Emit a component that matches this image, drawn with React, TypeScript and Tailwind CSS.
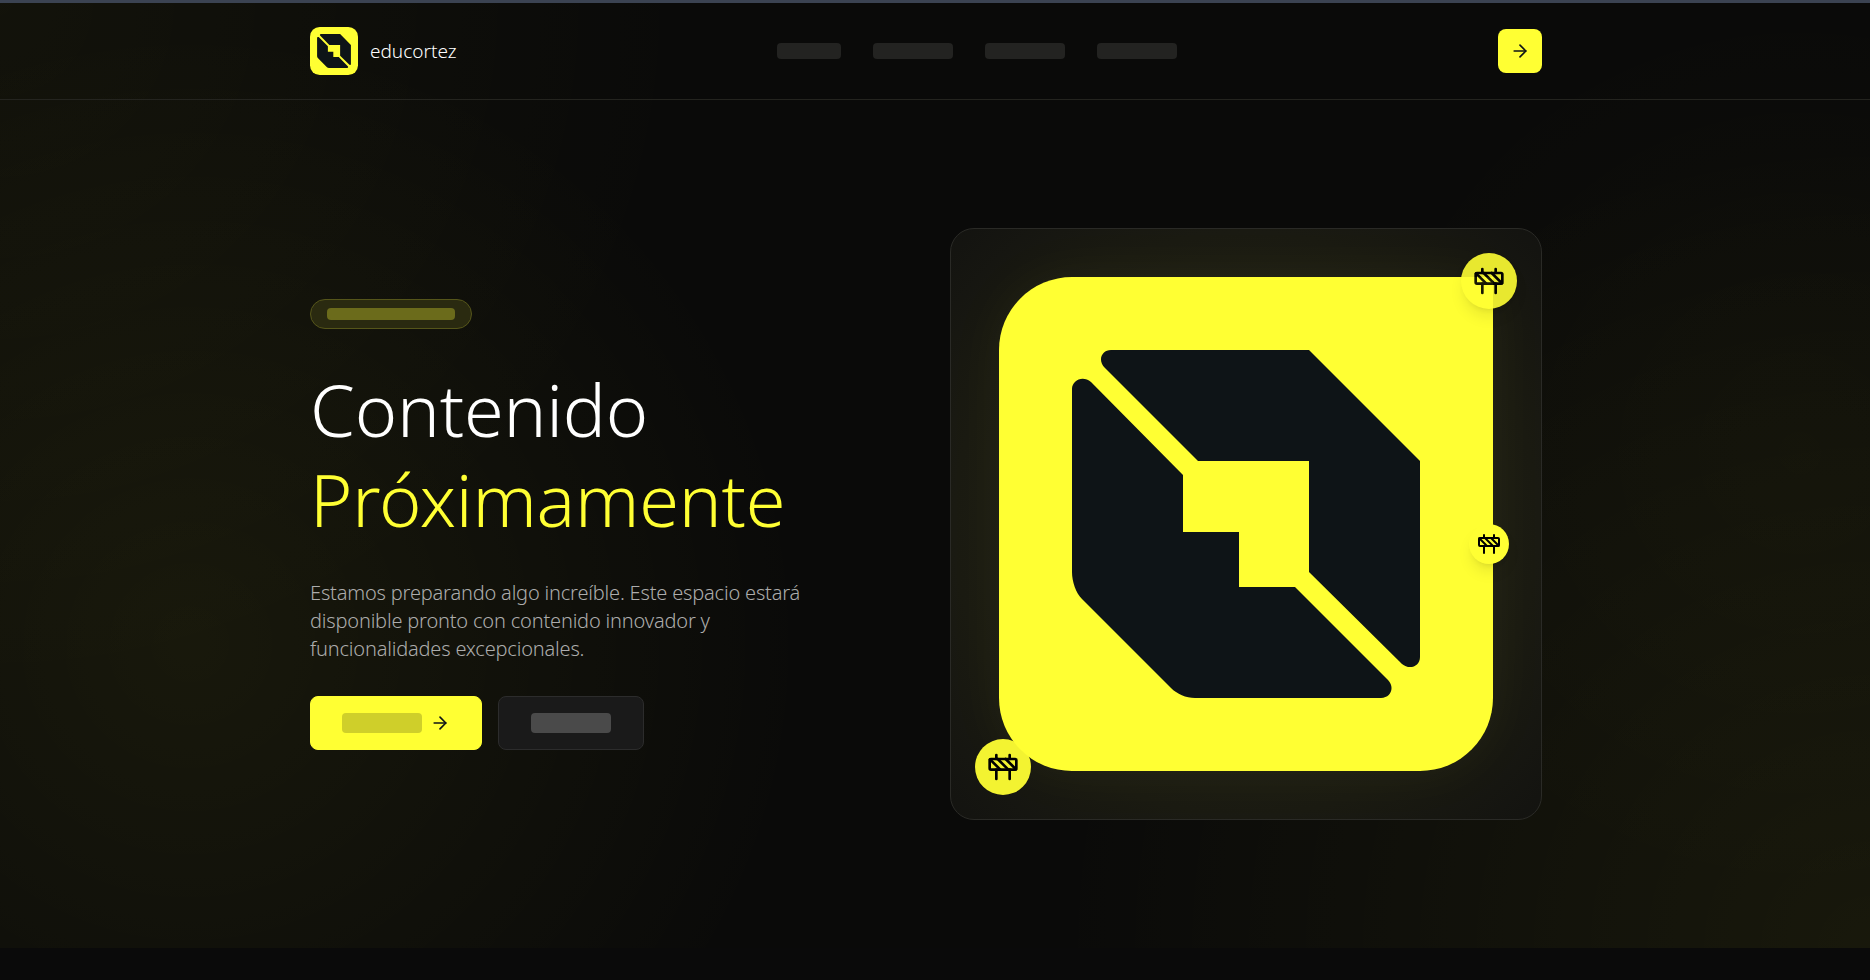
import { ArrowRight, Construction } from "lucide-react";

function Logo({ className, big }: { className: string; big?: boolean }) {
  return (
    <svg viewBox="0 0 494 494" className={className} aria-hidden="true">
      {big ? (
        <path
          fill="#ffff33"
          d="M73 0 L494 0 L494 421 A73 73 0 0 1 421 494 L73 494 A73 73 0 0 1 0 421 L0 73 A73 73 0 0 1 73 0 Z"
        />
      ) : (
        <rect width="494" height="494" rx="100" fill="#ffff33" />
      )}
      <path
        fill="#0e1417"
        d="M112 73 L310 73 L421 184 L421 380 C421 390 410 393 403 387 L310 295 L310 184 L199 184 L106 91 C98 83 103 73 112 73 Z"
      />
      <path
        fill="#0e1417"
        d="M73 112 C73 103 84 98 92 105 L184 198 L184 255 L240 255 L240 310 L296 310 L389 403 C396 410 392 421 382 421 L196 421 C187 421 178 417 172 411 L83 322 C77 316 73 305 73 295 Z"
      />
    </svg>
  );
}

function Barrier({ wrap, icon }: { wrap: string; icon: string }) {
  return (
    <div className={wrap}>
      <Construction className={icon} strokeWidth={2} />
    </div>
  );
}

export default function App() {
  return (
    <div className="min-h-[980px] bg-[#0a0a0a] font-['Noto_Sans',sans-serif] text-white">
      <div className="h-[3px] bg-[#3b4352]" />
      <div className="bg-[radial-gradient(circle_at_190px_640px,rgba(255,255,51,0.06),transparent_620px),radial-gradient(circle_at_1870px_945px,rgba(255,255,51,0.06),transparent_820px),radial-gradient(circle_at_1800px_450px,rgba(255,255,51,0.025),transparent_460px),radial-gradient(circle_at_0px_0px,rgba(255,255,51,0.035),transparent_700px),linear-gradient(#0a0a09,#0a0a09)]">
        <header className="border-b border-[#24241f]">
          <div className="w-[1852px]">
            <div className="mx-auto flex h-[96px] max-w-[1280px] items-center justify-between px-6">
              <div className="flex items-center gap-3">
                <Logo className="h-12 w-12" />
                <span className="text-[19px] font-light text-white">educortez</span>
              </div>
              <nav className="flex gap-8">
                <div className="h-4 w-16 rounded bg-[#232321]" />
                <div className="h-4 w-20 rounded bg-[#232321]" />
                <div className="h-4 w-20 rounded bg-[#232321]" />
                <div className="h-4 w-20 rounded bg-[#232321]" />
              </nav>
              <button className="flex h-11 w-11 items-center justify-center rounded-lg bg-[#ffff33] text-[#0e1417]">
                <ArrowRight className="h-5 w-5" />
              </button>
            </div>
          </div>
        </header>
        <div className="w-[1852px]">
          <main className="mx-auto grid h-[848px] max-w-[1280px] grid-cols-2 items-center gap-12 px-6">
            <div>
              <div className="mb-[35px] inline-flex rounded-full border border-[#55551a] bg-[#2a2a10] px-4 py-2">
                <div className="h-3 w-32 rounded bg-[#6b6b1b]" />
              </div>
              <h1 className="mb-[35px] text-[72px] font-light leading-[90px] tracking-[-0.2px]">
                Contenido
                <br />
                <span className="text-[#ffff33]">Próximamente</span>
              </h1>
              <p className="mb-[33px] max-w-[512px] text-[20px] font-light leading-7 tracking-[-0.18px] text-[#acacac]">
                Estamos preparando algo increíble. Este espacio estará disponible pronto con contenido innovador y
                funcionalidades excepcionales.
              </p>
              <div className="flex gap-4">
                <button className="flex items-center gap-2 rounded-lg border border-[#ffff33] bg-[#ffff33] px-[31px] py-4 text-[#0e1417]">
                  <div className="h-5 w-20 rounded bg-[#cfcf2a]" />
                  <ArrowRight className="h-5 w-5" />
                </button>
                <button className="rounded-lg border border-[#2c2c2c] bg-[#1a1a1a] px-8 py-4">
                  <div className="h-5 w-20 rounded bg-[#4a4a4a]" />
                </button>
              </div>
            </div>
            <div className="rounded-3xl border border-[#2a2a26] bg-[radial-gradient(circle_at_50%_50%,#26261a_0%,#1a1a12_70%,#131310_100%)] p-12">
              <div className="relative rounded-[73px] rounded-tr-none shadow-[0_0_60px_rgba(255,255,51,0.05)]">
                <Logo big className="block aspect-square w-full" />
                <Barrier
                  wrap="absolute -right-6 -top-6 flex h-14 w-14 items-center justify-center rounded-full bg-[#ffff33] text-black opacity-90 shadow-lg"
                  icon="h-8 w-8"
                />
                <Barrier
                  wrap="absolute -right-4 top-1/2 flex h-10 w-10 items-center justify-center rounded-full bg-[#ffff33] text-black shadow-lg"
                  icon="h-6 w-6"
                />
                <Barrier
                  wrap="absolute -bottom-6 -left-6 flex h-14 w-14 items-center justify-center rounded-full bg-[#ffff33] text-black opacity-95"
                  icon="h-8 w-8"
                />
              </div>
            </div>
          </main>
        </div>
      </div>
    </div>
  );
}
